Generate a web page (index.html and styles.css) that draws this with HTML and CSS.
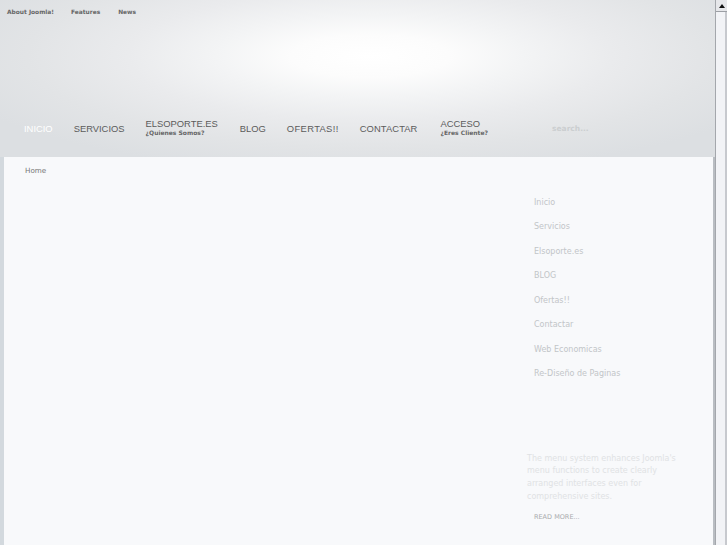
FILE: index.html
```html
<!DOCTYPE html>
<html>
<head>
<meta charset="utf-8">
<link rel="stylesheet" href="styles.css">
</head>
<body>
<div class="site">
  <header class="header">
    <nav class="toplinks">
      <a>About Joomla!</a>
      <a>Features</a>
      <a class="news">News</a>
    </nav>
    <div class="navbar">
      <ul class="mainnav">
        <li class="active"><span class="lbl">INICIO</span></li>
        <li><span class="lbl">SERVICIOS</span></li>
        <li class="two"><span class="lbl">ELSOPORTE.ES</span><span class="sub">¿Quienes Somos?</span></li>
        <li class="blog"><span class="lbl">BLOG</span></li>
        <li class="ofertas"><span class="lbl">OFERTAS!!</span></li>
        <li class="contactar"><span class="lbl">CONTACTAR</span></li>
        <li class="two acceso"><span class="lbl">ACCESO</span><span class="sub">¿Eres Cliente?</span></li>
      </ul>
      <div class="search">search...</div>
    </div>
  </header>
  <main class="panel">
    <div class="content">
      <div class="breadcrumb">Home</div>
    </div>
    <aside class="sidebar">
      <ul class="sidemenu">
        <li>Inicio</li>
        <li>Servicios</li>
        <li>Elsoporte.es</li>
        <li>BLOG</li>
        <li>Ofertas!!</li>
        <li>Contactar</li>
        <li>Web Economicas</li>
        <li>Re-Diseño de Paginas</li>
      </ul>
      <p class="blurb">The menu system enhances Joomla's menu functions to create clearly arranged interfaces even for comprehensive sites.</p>
      <div class="readmore">READ MORE...</div>
    </aside>
  </main>
</div>
<div class="scrollbar">
  <div class="sb-btn"><span class="sb-arrow"></span></div>
  <div class="sb-track"></div>
</div>
</body>
</html>
```

FILE: styles.css
```css
html, body {
  margin: 0;
  padding: 0;
  height: 545px;
  overflow: hidden;
}
body {
  display: flex;
  font-family: "DejaVu Sans", sans-serif;
  background: #d4dadf;
}
.site {
  width: 715px;
  display: flex;
  flex-direction: column;
  background: linear-gradient(90deg, #d3d9de 0, #d3d9de 4px, transparent 4px, transparent 713px, #b9bdc2 713px);
}
.header {
  height: 157px;
  flex: none;
  display: flex;
  flex-direction: column;
  background:
    radial-gradient(ellipse 440px 118px at 370px 56px, #ffffff 0%, #fcfcfc 18%, #f3f4f5 35%, #eaebed 55%, #e2e4e6 78%, #dcdfe2 100%),
    #dcdfe2;
}
.toplinks {
  display: flex;
  gap: 17px;
  padding: 9px 0 0 7px;
  font-size: 5.9px;
  font-weight: bold;
  color: #666;
}
.toplinks .news {
  margin-left: 1px;
}
.navbar {
  display: flex;
  align-items: center;
  margin-top: 106px;
  padding-left: 24px;
}
.mainnav {
  list-style: none;
  margin: 0;
  padding: 0;
  display: flex;
  align-items: center;
  gap: 21px;
  font-family: "Liberation Sans", Arial, sans-serif;
}
.mainnav li {
  display: flex;
  flex-direction: column;
  color: #5b5b5b;
}
.mainnav .lbl {
  font-size: 9.4px;
  line-height: 11px;
}
.mainnav .active .lbl {
  color: #ffffff;
}
.mainnav .blog {
  margin-left: 1px;
}
.mainnav .ofertas .lbl {
  letter-spacing: 0.35px;
}
.mainnav .contactar .lbl {
  letter-spacing: 0.1px;
}
.mainnav .acceso {
  margin-left: 2px;
}
.mainnav .sub {
  font-family: "DejaVu Sans", sans-serif;
  font-size: 6px;
  font-weight: bold;
  line-height: 7px;
  color: #666;
}
.mainnav .two {
  margin-top: -3px;
}
.search {
  margin-left: 64px;
  font-size: 7.5px;
  font-weight: bold;
  color: #cbced0;
}
.panel {
  flex: 1;
  margin: 0 2px 0 4px;
  background: #f8f9fb;
  display: flex;
}
.content {
  flex: 1;
}
.breadcrumb {
  padding: 9px 0 0 21px;
  font-size: 7.2px;
  color: #777;
}
.sidebar {
  width: 186px;
  flex: none;
  padding-top: 41px;
}
.sidemenu {
  list-style: none;
  margin: 0;
  padding: 0 0 0 7px;
  font-size: 8px;
  color: #c2c5c8;
}
.sidemenu li {
  height: 24.45px;
  line-height: 10px;
}
.blurb {
  margin: 59px 0 0 0;
  width: 165px;
  font-size: 8px;
  line-height: 12.7px;
  color: #e0e2e4;
}
.readmore {
  margin: 10px 0 0 7px;
  font-size: 6.5px;
  color: #a9abad;
}
.scrollbar {
  width: 12px;
  flex: none;
  display: flex;
  flex-direction: column;
  background: #f2f3f6;
  border-left: 1px solid #a4a7ac;
  box-sizing: border-box;
  box-shadow: inset -2px 0 0 #c7c9ce;
}
.sb-btn {
  height: 11px;
  display: flex;
  align-items: center;
  justify-content: center;
  background: #e6e7ea;
  border-bottom: 1px solid #9c9fa4;
}
.sb-arrow {
  width: 0;
  height: 0;
  border-left: 3.5px solid transparent;
  border-right: 3.5px solid transparent;
  border-bottom: 4px solid #111;
}
.sb-track {
  flex: 1;
}
```
